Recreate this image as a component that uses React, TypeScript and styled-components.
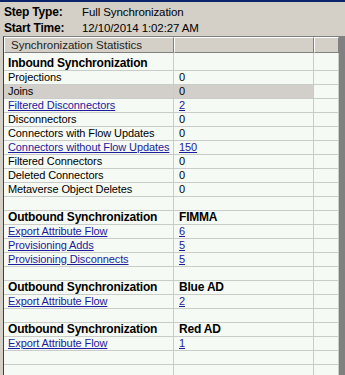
import React from "react";
import styled, { createGlobalStyle } from "styled-components";

const GlobalStyle = createGlobalStyle`
  html, body {
    margin: 0;
    padding: 0;
    background: #d4d0c8;
  }
  body {
    font-family: "Liberation Sans", Arial, sans-serif;
    font-size: 11px;
    color: #000;
  }
`;

const Window = styled.div`
  width: 345px;
  height: 375px;
  overflow: hidden;
  background: #d4d0c8;
  border-top: 2px solid #0a246a;
  box-sizing: border-box;
`;

const Info = styled.div`
  display: grid;
  grid-template-columns: 78px auto;
  padding: 3px 4px 0 4px;
  height: 34px;
  box-sizing: border-box;
`;

const InfoLabel = styled.div`
  font-weight: bold;
  font-size: 12px;
  line-height: 14px;
  letter-spacing: -0.2px;
`;

const InfoValue = styled.div`
  font-size: 11.5px;
  line-height: 14px;
  letter-spacing: -0.1px;
`;

const Frame = styled.div`
  margin-left: 3px;
  border-left: 1px solid #404040;
  border-top: 1px solid #808080;
  border-right: 6px solid #808080;
  box-shadow: inset -1px 0 0 #ffffff;
  height: 340px;
  overflow: hidden;
  background: #f6faf5;
`;

const Grid = styled.div`
  display: grid;
  grid-template-columns: 170px 140px 25px;
`;

const HeaderCell = styled.div`
  background: #d4d0c8;
  height: 16px;
  box-sizing: border-box;
  border-top: 1px solid #ffffff;
  border-left: 1px solid #ffffff;
  border-right: 1px solid #808080;
  border-bottom: 1px solid #808080;
  padding-left: 6px;
  line-height: 14px;
  font-size: 11.5px;
  color: #222;
`;

const Spacer = styled.div`
  height: 4px;
  border-right: 1px solid #cbcfcb;
`;

const Cell = styled.div<{ $bold?: boolean; $selected?: boolean; $pad: number }>`
  height: 14px;
  box-sizing: border-box;
  border-bottom: 1px solid #c9ccc9;
  border-right: 1px solid #c9ccc9;
  padding-left: ${(p) => p.$pad}px;
  line-height: 13px;
  font-size: ${(p) => (p.$bold ? 12 : 11)}px;
  font-weight: ${(p) => (p.$bold ? "bold" : "normal")};
  letter-spacing: ${(p) => (p.$bold ? "-0.2px" : "-0.1px")};
  background: ${(p) => (p.$selected ? "#d2cfca" : "transparent")};
  white-space: nowrap;
  overflow: hidden;
`;

const Link = styled.span`
  color: #1c1c9c;
  text-decoration: underline;
`;

type Row = {
  label?: string;
  value?: string;
  link?: boolean;
  bold?: boolean;
  selected?: boolean;
};

const rows: Row[] = [
  { label: "Inbound Synchronization", bold: true },
  { label: "Projections", value: "0" },
  { label: "Joins", value: "0", selected: true },
  { label: "Filtered Disconnectors", value: "2", link: true },
  { label: "Disconnectors", value: "0" },
  { label: "Connectors with Flow Updates", value: "0" },
  { label: "Connectors without Flow Updates", value: "150", link: true },
  { label: "Filtered Connectors", value: "0" },
  { label: "Deleted Connectors", value: "0" },
  { label: "Metaverse Object Deletes", value: "0" },
  {},
  { label: "Outbound Synchronization", value: "FIMMA", bold: true },
  { label: "Export Attribute Flow", value: "6", link: true },
  { label: "Provisioning Adds", value: "5", link: true },
  { label: "Provisioning Disconnects", value: "5", link: true },
  {},
  { label: "Outbound Synchronization", value: "Blue AD", bold: true },
  { label: "Export Attribute Flow", value: "2", link: true },
  {},
  { label: "Outbound Synchronization", value: "Red AD", bold: true },
  { label: "Export Attribute Flow", value: "1", link: true },
  {},
  {},
];

export default function App() {
  return (
    <Window>
      <GlobalStyle />
      <Info>
        <InfoLabel>Step Type:</InfoLabel>
        <InfoValue>Full Synchronization</InfoValue>
        <InfoLabel>Start Time:</InfoLabel>
        <InfoValue>12/10/2014 1:02:27 AM</InfoValue>
      </Info>
      <Frame>
        <Grid>
          <HeaderCell>Synchronization Statistics</HeaderCell>
          <HeaderCell />
          <HeaderCell />
          <Spacer />
          <Spacer />
          <Spacer />
          {rows.map((r, i) => (
            <React.Fragment key={i}>
              <Cell $pad={4} $bold={r.bold} $selected={r.selected}>
                {r.link ? <Link>{r.label}</Link> : r.label}
              </Cell>
              <Cell $pad={5} $bold={r.bold} $selected={r.selected}>
                {r.link ? <Link>{r.value}</Link> : r.value}
              </Cell>
              <Cell $pad={0} />
            </React.Fragment>
          ))}
        </Grid>
      </Frame>
    </Window>
  );
}
